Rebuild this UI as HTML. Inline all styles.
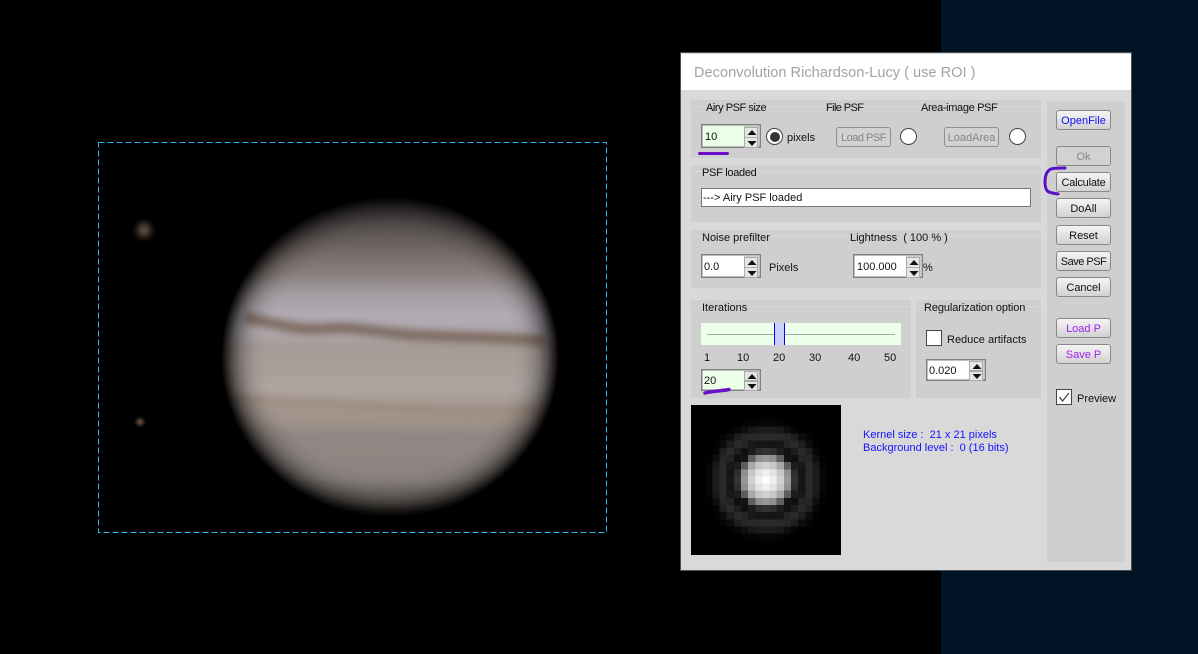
<!DOCTYPE html>
<html><head><meta charset="utf-8"><style>
html,body{margin:0;padding:0;background:#000}
#r{position:relative;width:1198px;height:654px;overflow:hidden;background:#000;font-family:"Liberation Sans",sans-serif;font-size:11px;color:#111}
#r div,#r span.t{position:absolute;box-sizing:border-box}
.t{white-space:nowrap;line-height:14px;height:14px;margin-top:1px}
.p{background:#cfcfcf;border-top:1px solid #d0d0d0}
.l{height:1px;background:#d8d8d8}
.b{width:55px;height:20px;left:1056px;border:1px solid #888;border-radius:3px;background:linear-gradient(#f4f4f4,#d2d2d2);text-align:center;line-height:20px;font-size:11px;white-space:nowrap}
.f{width:55px;height:20px;border:1px solid #8f8f8f;border-radius:3px;background:#d2d2d2;color:#858585;text-align:center;line-height:20px;white-space:nowrap}
.s{width:60px;border:1px solid #808080;box-shadow:inset 0 0 0 .5px #808080;background:#fff;line-height:20px;padding-left:2px}
.g{background:#ecffe8}
.u{right:1px;top:1px;bottom:1px;width:15px;background:#cfcfcf}
.a{left:0;width:14px;background:#e6e6e6;border:1px solid #aaa}
.a svg{position:absolute;left:2px;top:1px}
.o{width:17px;height:17px;border-radius:50%;background:#fff;border:1px solid #444}
.c{width:17px;height:17px;background:#fff;border:1px solid #444}
</style></head><body><div id="r">
<div style="left:941px;top:0;width:257px;height:654px;background:#001426"></div>
<svg style="position:absolute;left:0;top:0" width="941" height="654" viewBox="0 0 941 654">
<defs>
<linearGradient id="jg" x1="0" y1="198" x2="0" y2="516" gradientUnits="userSpaceOnUse">
<stop offset="0" stop-color="#3f3a38"/><stop offset=".08" stop-color="#575150"/><stop offset=".17" stop-color="#736966"/><stop offset=".24" stop-color="#8a807e"/><stop offset=".3" stop-color="#a39ca0"/><stop offset=".37" stop-color="#b2abb4"/><stop offset=".42" stop-color="#b0a8ae"/><stop offset=".47" stop-color="#a69c97"/><stop offset=".54" stop-color="#a99f9a"/><stop offset=".6" stop-color="#afa5a1"/><stop offset=".66" stop-color="#a3978f"/><stop offset=".7" stop-color="#a0938a"/><stop offset=".78" stop-color="#928985"/><stop offset=".88" stop-color="#8a827e"/><stop offset=".96" stop-color="#6a645f"/><stop offset="1" stop-color="#3c3834"/>
</linearGradient>
<radialGradient id="jr" cx="390" cy="357" r="169" gradientUnits="userSpaceOnUse" gradientTransform="translate(390 357) scale(1 .95) translate(-390 -357)">
<stop offset="0" stop-color="#fff"/><stop offset=".74" stop-color="#fff"/><stop offset=".8" stop-color="#f2f2f2"/><stop offset=".85" stop-color="#d8d8d8"/><stop offset=".89" stop-color="#b4b4b4"/><stop offset=".93" stop-color="#808080"/><stop offset=".97" stop-color="#383838"/><stop offset="1" stop-color="#000"/>
</radialGradient>
<filter id="b2" filterUnits="userSpaceOnUse" x="150" y="130" width="480" height="460"><feGaussianBlur stdDeviation="4"/></filter>
<filter id="b3" filterUnits="userSpaceOnUse" x="150" y="130" width="480" height="460"><feGaussianBlur stdDeviation="7"/></filter>
<filter id="b4" filterUnits="userSpaceOnUse" x="110" y="200" width="70" height="60"><feGaussianBlur stdDeviation="3.500"/></filter>
<filter id="b5" filterUnits="userSpaceOnUse" x="120" y="405" width="40" height="35"><feGaussianBlur stdDeviation="1.800"/></filter>
<mask id="jm" maskUnits="userSpaceOnUse" x="150" y="130" width="480" height="460"><rect x="150" y="130" width="480" height="460" fill="url(#jr)"/></mask>
</defs>
<g mask="url(#jm)">
<rect x="190" y="170" width="400" height="370" fill="url(#jg)"/>
<path d="M245 318C275 322 290 330 320 329C345 326 365 330 400 334C440 338 470 335 545 341" fill="none" stroke="#7a675b" stroke-width="10" filter="url(#b2)"/>
<path d="M230 398C300 402 350 404 400 408C450 411 490 412 550 410" fill="none" stroke="#95826f" stroke-width="4" filter="url(#b2)" opacity=".9"/>
<path d="M210 436C350 438 440 438 570 434" fill="none" stroke="#80767a" stroke-width="8" filter="url(#b3)" opacity=".5"/>
</g>
<circle cx="144" cy="230" r="7" fill="#5e5042" filter="url(#b4)"/>
<circle cx="140" cy="422" r="3.500" fill="#74543c" filter="url(#b5)"/>
<rect x="98.500" y="142.500" width="508" height="390" fill="none" stroke="#2fb6ee" stroke-width="1" stroke-dasharray="6 3"/>
</svg>

<div style="left:680px;top:52px;width:452px;height:519px;background:#d9d9d9;border:1px solid #4a4f55"></div>
<div style="left:681px;top:54px;width:450px;height:36px;background:#fff"></div>
<span class="t" style="left:694px;top:63px;height:18px;line-height:18px;font-size:14.6px;color:#a3a3a3">Deconvolution Richardson-Lucy ( use ROI )</span>

<div class="p" style="left:691px;top:100px;width:350px;height:58px"></div><div class="l" style="left:691px;top:106px;width:350px"></div><div class="l" style="left:691px;top:158px;width:350px"></div>
<div class="p" style="left:691px;top:165px;width:350px;height:57px"></div><div class="l" style="left:691px;top:171px;width:350px"></div><div class="l" style="left:691px;top:222px;width:350px"></div>
<div class="p" style="left:691px;top:230px;width:350px;height:58px"></div><div class="l" style="left:691px;top:236px;width:350px"></div><div class="l" style="left:691px;top:288px;width:350px"></div>
<div class="p" style="left:691px;top:300px;width:220px;height:98px"></div><div class="l" style="left:691px;top:306px;width:220px"></div><div class="l" style="left:691px;top:398px;width:220px"></div>
<div class="p" style="left:916px;top:300px;width:125px;height:98px"></div><div class="l" style="left:916px;top:306px;width:125px"></div><div class="l" style="left:916px;top:398px;width:125px"></div>
<div class="p" style="left:1047px;top:101px;width:78px;height:461px"></div>

<span class="t" style="left:706px;top:100px;background:#cfcfcf;letter-spacing:-.45px">Airy PSF size</span>
<span class="t" style="left:826px;top:100px;background:#cfcfcf;letter-spacing:-.6px">File PSF</span>
<span class="t" style="left:921px;top:100px;background:#cfcfcf;letter-spacing:-.35px">Area-image PSF</span>

<div class="s g" style="left:701px;top:124px;height:24px;line-height:25px;padding-left:3px">10<div class="u"><div class="a" style="top:1px;height:11px"><svg width="10" height="8"><path d="M5 1L9.500 6H.5z" fill="#111"/></svg></div><div class="a" style="top:11px;height:11px"><svg width="10" height="8"><path d="M.5 2H9.500L5 7z" fill="#111"/></svg></div></div></div>
<div style="left:698px;top:152px;width:31px;height:3px;background:#6a0ec8;border-radius:2px"></div>
<div class="o" style="left:766px;top:128px"><div style="left:2.500px;top:2.500px;width:10px;height:10px;border-radius:50%;background:#333"></div></div>
<span class="t" style="left:787px;top:130px">pixels</span>
<div class="f" style="left:836px;top:127px;letter-spacing:-.5px">Load PSF</div>
<div class="o" style="left:900px;top:128px"></div>
<div class="f" style="left:944px;top:127px">LoadArea</div>
<div class="o" style="left:1009px;top:128px"></div>

<span class="t" style="left:702px;top:165px;background:#cfcfcf;letter-spacing:-.3px">PSF loaded</span>
<div style="left:701px;top:188px;width:330px;height:19px;background:#fff;border:1px solid #777;line-height:18px;padding-left:1px;white-space:nowrap">---&gt; Airy PSF loaded</div>

<span class="t" style="left:702px;top:230px;background:#cfcfcf">Noise prefilter</span>
<span class="t" style="left:850px;top:230px;background:#cfcfcf">Lightness&nbsp; ( 100 % )</span>
<div class="s" style="left:701px;top:254px;height:24px;line-height:25px">0.0<div class="u"><div class="a" style="top:1px;height:11px"><svg width="10" height="8"><path d="M5 1L9.500 6H.5z" fill="#111"/></svg></div><div class="a" style="top:11px;height:11px"><svg width="10" height="8"><path d="M.5 2H9.500L5 7z" fill="#111"/></svg></div></div></div>
<span class="t" style="left:769px;top:260px">Pixels</span>
<div class="s" style="left:853px;top:254px;width:70px;height:24px;line-height:25px;padding-left:3px">100.000<div class="u"><div class="a" style="top:1px;height:11px"><svg width="10" height="8"><path d="M5 1L9.500 6H.5z" fill="#111"/></svg></div><div class="a" style="top:11px;height:11px"><svg width="10" height="8"><path d="M.5 2H9.500L5 7z" fill="#111"/></svg></div></div></div>
<span class="t" style="left:923px;top:260px">%</span>

<span class="t" style="left:702px;top:300px;background:#cfcfcf">Iterations</span>
<div class="g" style="left:701px;top:323px;width:200px;height:22px"></div>
<div style="left:707px;top:334px;width:188px;height:1px;background:#a8a8a8"></div>
<div style="left:774px;top:323px;width:11px;height:22px;background:#ccd0fb;border-left:1px solid #00f;border-right:1px solid #00f"></div>
<span class="t" style="left:704px;top:350px">1</span><span class="t" style="left:737px;top:350px">10</span><span class="t" style="left:773px;top:350px">20</span><span class="t" style="left:809px;top:350px">30</span><span class="t" style="left:848px;top:350px">40</span><span class="t" style="left:884px;top:350px">50</span>
<div class="s g" style="left:701px;top:369px;height:22px;line-height:23px">20<div class="u"><div class="a" style="top:0;height:10px"><svg width="10" height="8"><path d="M5 1L9.500 6H.5z" fill="#111"/></svg></div><div class="a" style="top:10px;height:10px"><svg width="10" height="8"><path d="M.5 1H9.500L5 6z" fill="#111"/></svg></div></div></div>
<svg style="position:absolute;left:700px;top:385px" width="35" height="12"><path d="M5 8C12 6 22 6 29 4.500" fill="none" stroke="#6a10c8" stroke-width="3.500" stroke-linecap="round"/></svg>

<span class="t" style="left:924px;top:300px;background:#cfcfcf;letter-spacing:-.1px">Regularization option</span>
<div class="c" style="left:926px;top:330px;width:16px;height:16px"></div>
<span class="t" style="left:947px;top:332px">Reduce artifacts</span>
<div class="s" style="left:926px;top:359px;height:22px;line-height:23px;padding-left:2px">0.020<div class="u"><div class="a" style="top:0;height:10px"><svg width="10" height="8"><path d="M5 1L9.500 6H.5z" fill="#111"/></svg></div><div class="a" style="top:10px;height:10px"><svg width="10" height="8"><path d="M.5 1H9.500L5 6z" fill="#111"/></svg></div></div></div>

<div class="b" style="top:110px;color:#1010ff">OpenFile</div>
<div class="b" style="top:146px;color:#858585;background:#d2d2d2">Ok</div>
<div class="b" style="top:172px;letter-spacing:-.2px">Calculate</div>
<div class="b" style="top:198px">DoAll</div>
<div class="b" style="top:225px">Reset</div>
<div class="b" style="top:251px;letter-spacing:-.5px">Save PSF</div>
<div class="b" style="top:277px">Cancel</div>
<div class="b" style="top:318px;color:#a020f0">Load P</div>
<div class="b" style="top:344px;color:#a020f0">Save P</div>
<div class="c" style="left:1056px;top:389px;width:16px;height:16px"><svg style="position:absolute;left:0;top:0" width="14" height="14"><path d="M2.500 7L5.500 11L12 3" fill="none" stroke="#444" stroke-width="1.200"/></svg></div>
<span class="t" style="left:1077px;top:391px">Preview</span>
<svg style="position:absolute;left:1038px;top:162px" width="34" height="38"><path d="M27 6C20 6 14 6 12 7.500C8 10 7 15 7 20C7 25 8 28 10 29.500C13 31 16 31.500 20 32" fill="none" stroke="#5a10c8" stroke-width="3" stroke-linecap="round"/></svg>

<svg style="position:absolute;left:691px;top:405px" width="150" height="150" viewBox="0 0 21 21" shape-rendering="crispEdges">
<defs><g id="q" transform="translate(10 10)">
<path fill="#ffffff" d="M0 0h1v1h-1z"/>
<path fill="#f0f0f0" d="M0 1h1v1h-1zM1 0h1v1h-1z"/>
<path fill="#e4e4e4" d="M1 1h1v1h-1z"/>
<path fill="#d2d2d2" d="M0 2h1v1h-1zM2 0h1v1h-1z"/>
<path fill="#c8c8c8" d="M1 2h1v1h-1zM2 1h1v1h-1z"/>
<path fill="#a8a8a8" d="M2 2h1v1h-1z"/>
<path fill="#989898" d="M0 3h1v1h-1zM3 0h1v1h-1z"/>
<path fill="#8f8f8f" d="M1 3h1v1h-1zM3 1h1v1h-1z"/>
<path fill="#5e5e5e" d="M2 3h1v1h-1zM3 2h1v1h-1z"/>
<path fill="#141414" d="M3 3h1v1h-1z"/>
<path fill="#343434" d="M0 4h1v1h-1zM4 0h1v1h-1z"/>
<path fill="#2e2e2e" d="M1 4h1v1h-1zM4 1h1v1h-1z"/>
<path fill="#1c1c1c" d="M2 4h1v1h-1zM4 2h1v1h-1zM1 7h1v1h-1zM7 1h1v1h-1z"/>
<path fill="#101010" d="M3 4h1v1h-1zM4 3h1v1h-1z"/>
<path fill="#1e1e1e" d="M4 4h1v1h-1z"/>
<path fill="#161616" d="M0 5h1v1h-1zM5 0h1v1h-1z"/>
<path fill="#141414" d="M1 5h1v1h-1zM5 1h1v1h-1z"/>
<path fill="#181818" d="M2 5h1v1h-1zM5 2h1v1h-1zM2 7h1v1h-1zM7 2h1v1h-1z"/>
<path fill="#242424" d="M3 5h1v1h-1zM5 3h1v1h-1z"/>
<path fill="#2a2a2a" d="M4 5h1v1h-1zM5 4h1v1h-1zM0 6h1v1h-1zM6 0h1v1h-1zM1 6h1v1h-1zM6 1h1v1h-1zM2 6h1v1h-1zM6 2h1v1h-1z"/>
<path fill="#1e1e1e" d="M5 5h1v1h-1z"/>
<path fill="#262626" d="M3 6h1v1h-1zM6 3h1v1h-1z"/>
<path fill="#1e1e1e" d="M4 6h1v1h-1zM6 4h1v1h-1zM0 7h1v1h-1zM7 0h1v1h-1z"/>
<path fill="#0c0c0c" d="M5 6h1v1h-1zM6 5h1v1h-1z"/>
<path fill="#060606" d="M6 6h1v1h-1zM4 7h1v1h-1zM7 4h1v1h-1zM1 8h1v1h-1zM8 1h1v1h-1z"/>
<path fill="#0e0e0e" d="M3 7h1v1h-1zM7 3h1v1h-1z"/>
<path fill="#020202" d="M5 7h1v1h-1zM7 5h1v1h-1zM3 8h1v1h-1zM8 3h1v1h-1zM0 9h1v1h-1zM9 0h1v1h-1z"/>
<path fill="#080808" d="M0 8h1v1h-1zM8 0h1v1h-1z"/>
<path fill="#040404" d="M2 8h1v1h-1zM8 2h1v1h-1z"/>
</g></defs>
<rect width="21" height="21" fill="#000"/>
<use href="#q"/>
<use href="#q" transform="matrix(-1 0 0 1 21 0)"/>
<use href="#q" transform="matrix(1 0 0 -1 0 21)"/>
<use href="#q" transform="matrix(-1 0 0 -1 21 21)"/>
</svg>

<span class="t" style="left:863px;top:427px;color:#1414ff">Kernel size :&nbsp; 21 x 21 pixels</span>
<span class="t" style="left:863px;top:440px;color:#1414ff">Background level :&nbsp; 0 (16 bits)</span>
</div></body></html>
